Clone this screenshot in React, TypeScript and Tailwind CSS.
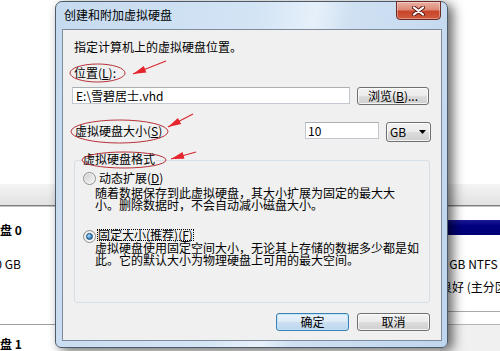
import React from "react";

const cjk = "font-['Noto_Sans_CJK_SC','Noto_Sans',sans-serif]";
const winButton =
  "flex items-center justify-center rounded-[3px] border border-[#707070] bg-[linear-gradient(#f2f2f2_0%,#ebebeb_49%,#dddddd_50%,#cfcfcf_100%)] shadow-[inset_0_0_0_1px_rgba(255,255,255,0.75)] text-[12px] leading-[12px] text-black";

const arrowHead = (x1: number, y1: number, x2: number, y2: number, len = 13, half = 3.5) => {
  const dx = x2 - x1;
  const dy = y2 - y1;
  const d = Math.hypot(dx, dy);
  const ux = dx / d;
  const uy = dy / d;
  const bx = x2 - ux * len;
  const by = y2 - uy * len;
  return `${x2},${y2} ${bx + uy * half},${by - ux * half} ${bx - uy * half},${by + ux * half}`;
};

const arrows = [
  { x1: 166, y1: 61, x2: 133, y2: 74 },
  { x1: 193, y1: 114, x2: 168, y2: 127 },
  { x1: 196, y1: 152, x2: 171, y2: 159 },
];

const Radio: React.FC<{ checked?: boolean }> = ({ checked }) => (
  <span className="flex h-[13px] w-[13px] shrink-0 items-center justify-center rounded-full border border-[#8e8f8f] bg-[linear-gradient(135deg,#e6e6e6,#fbfbfb)]">
    {checked ? (
      <span className="h-[7px] w-[7px] rounded-full border border-[#1c4c74] bg-[radial-gradient(circle_at_35%_35%,#b7e1fb,#3a8fd0_55%,#17507f)]" />
    ) : (
      <span className="h-[9px] w-[9px] rounded-full bg-[linear-gradient(135deg,#cfd1d3,#f4f4f4)]" />
    )}
  </span>
);

// mnemonic letter, e.g. (L)
const Mn: React.FC<{ k: string }> = ({ k }) => (
  <>
    (<span className="inline-block align-top underline underline-offset-[1px]">{k}</span>)
  </>
);

const DiskBackground = () => (
  <div className={`flex h-full flex-col ${cjk} text-[12px] text-black`}>
    <div className="h-[186px] bg-white" />
    <div className="h-[21px] bg-[linear-gradient(#f4f4f4,#e2e2e2)]" />
    <div className="h-[1px] bg-[#7f7f7f]" />
    <div className="h-[1px] bg-[#c4c4c4]" />
    <div className="flex flex-1">
      <div className="flex w-[55px] flex-col overflow-hidden bg-white">
        <span className="-ml-[12px] mt-[16px] whitespace-nowrap font-bold leading-[14px]">磁盘 0</span>
        <span className="-ml-[28px] mt-[20px] whitespace-nowrap leading-[14px]">60.00 GB</span>
        <div className="mt-[53px] h-[1px] bg-[#a0a0a0]" />
        <span className="-ml-[12px] mt-[12px] whitespace-nowrap font-bold leading-[14px]">磁盘 1</span>
      </div>
      <div className="flex-1 bg-white" />
      <div className="flex w-[60px] flex-col overflow-hidden bg-white">
        <div className="mt-[13px] h-[15px] bg-[linear-gradient(#1a1a96,#00007f_40%,#000078)]" />
        <span className="mt-[22px] whitespace-nowrap leading-[14px]">5 GB NTFS</span>
        <span className="mt-[9px] whitespace-nowrap leading-[14px]">良好 (主分区)</span>
        <div className="mt-[17px] h-[1px] bg-[#a9a9a9]" />
        <div className="h-[12px] bg-white" />
        <div className="h-[1px] bg-[#b5b5b5]" />
        <div className="flex-1 bg-[#f0f0f0]" />
      </div>
    </div>
  </div>
);

const Dialog = () => (
  <div
    className={`absolute left-[55px] top-[1px] flex h-[347px] w-[393px] flex-col rounded-t-[7px] rounded-b-[6px] border border-[#4d5a69] bg-[linear-gradient(100deg,#c6daef_0%,#d3e4f5_45%,#e6f0fa_58%,#cfe0f2_66%,#c0d6ee_100%)] shadow-[5px_3px_12px_rgba(0,0,0,0.6)] ${cjk}`}
  >
    <div className="relative flex h-[27px] shrink-0 items-start">
      <span className="ml-[8px] mt-[6px] text-[12px] leading-[13px] text-black">创建和附加虚拟硬盘</span>
      <div className="absolute right-[6px] top-[-1px] flex h-[19px] w-[45px] items-center justify-center rounded-b-[4px] border border-[#6d2a22] bg-[linear-gradient(#eab0a4_0%,#dd8a76_45%,#c8452c_55%,#d05a3c_100%)] shadow-[inset_0_0_0_1px_rgba(255,255,255,0.35)]">
        <svg width="13" height="10" viewBox="0 0 13 10">
          <path d="M2 1.5 L11 8.5 M11 1.5 L2 8.5" stroke="#5a1e16" strokeWidth="4" strokeLinecap="round" />
          <path d="M2 1.5 L11 8.5 M11 1.5 L2 8.5" stroke="#ffffff" strokeWidth="2.2" strokeLinecap="round" />
        </svg>
      </div>
    </div>

    <div className="mb-[6px] ml-[6px] mr-[5px] flex flex-1 flex-col border border-[#7d8b9c] bg-[#f0f0f0] text-[12px] leading-[12px] text-black">
      <span className="pl-[11px] pt-[11px]">指定计算机上的虚拟硬盘位置。</span>
      <span className="mt-[14px] pl-[11px]">
        位置<Mn k="L" />:
      </span>

      <div className="mt-[8px] flex items-start gap-[7px] pl-[9px]">
        <div className="flex h-[17px] w-[278px] items-center border border-[#c3c7cf] border-t-[#abadb3] bg-white pl-[3px]">
          {"E:\\雪碧居士.vhd"}
        </div>
        <button className={`${winButton} h-[18px] w-[72px]`}>
          浏览<Mn k="B" />...
        </button>
      </div>

      <div className="mt-[17px] flex items-start pr-[10px]">
        <span className="mt-[3px] pl-[12px]">
          虚拟硬盘大小<Mn k="S" />
        </span>
        <div className="ml-auto flex items-start gap-[7px]">
          <div className="flex h-[17px] w-[74px] items-center border border-[#c3c7cf] border-t-[#abadb3] bg-white pl-[2px]">10</div>
          <div className="flex h-[20px] w-[45px] items-center justify-between rounded-[3px] border border-[#707070] bg-[linear-gradient(#f2f2f2_0%,#ebebeb_49%,#dddddd_50%,#cfcfcf_100%)] pl-[3px] pr-[4px] shadow-[inset_0_0_0_1px_rgba(255,255,255,0.75)]">
            <span>GB</span>
            <svg width="7" height="4" viewBox="0 0 7 4">
              <path d="M0 0 H7 L3.5 4 Z" fill="#000" />
            </svg>
          </div>
        </div>
      </div>

      <div className="ml-[11px] mt-[18px] flex h-[143px] w-[356px] flex-col rounded-[3px] border border-[#d5dfe5]">
        <span className="-mt-[8px] ml-[7px] self-start bg-[#f0f0f0] px-[1px]">虚拟硬盘格式</span>

        <div className="mt-[7px] flex h-[12px] items-start pl-[8px]">
          <Radio />
          <span className="ml-[3px]">
            动态扩展<Mn k="D" />
          </span>
        </div>
        <div className="mt-[3px] flex flex-col pl-[20px] leading-[12px]">
          <span>随着数据保存到此虚拟硬盘，其大小扩展为固定的最大大</span>
          <span>小。删除数据时，不会自动减小磁盘大小。</span>
        </div>

        <div className="mt-[19px] flex h-[12px] items-start pl-[8px]">
          <Radio checked />
          <span className="-mt-[1px] ml-[1px] border border-dotted border-black leading-[10px]">
            固定大小(推荐)<Mn k="F" />
          </span>
        </div>
        <div className="flex flex-col pl-[20px] leading-[12px]">
          <span>虚拟硬盘使用固定空间大小，无论其上存储的数据多少都是如</span>
          <span>此。它的默认大小为物理硬盘上可用的最大空间。</span>
        </div>
      </div>

      <div className="mt-[10px] flex justify-end gap-[8px] pr-[11px]">
        <button className="flex h-[18px] w-[73px] items-center justify-center rounded-[3px] border border-[#3c7fb1] bg-[linear-gradient(#eaf3fb_0%,#dce9f5_49%,#cde0f1_50%,#bcd6ee_100%)] shadow-[inset_0_0_0_1px_rgba(190,230,253,0.9)] text-[12px] leading-[12px]">
          确定
        </button>
        <button className={`${winButton} h-[18px] w-[73px]`}>取消</button>
      </div>
    </div>
  </div>
);

const Annotations = () => (
  <svg className="pointer-events-none absolute left-0 top-0" width="500" height="351" viewBox="0 0 500 351">
    <ellipse cx="97.5" cy="73" rx="27.5" ry="9" fill="none" stroke="#b8323a" strokeWidth="1" />
    <ellipse cx="119.5" cy="131.5" rx="48.5" ry="11.5" fill="none" stroke="#b8323a" strokeWidth="1" />
    <ellipse cx="124" cy="160" rx="42" ry="8" fill="none" stroke="#b8323a" strokeWidth="1" />
    {arrows.map((a, i) => (
      <g key={i}>
        <line x1={a.x1} y1={a.y1} x2={a.x2} y2={a.y2} stroke="#d8262c" strokeWidth="1.1" />
        <polygon points={arrowHead(a.x1, a.y1, a.x2, a.y2)} fill="#e5252b" />
      </g>
    ))}
  </svg>
);

export default function App() {
  return (
    <div className="relative h-[351px] w-[500px] overflow-hidden bg-white">
      <DiskBackground />
      <Dialog />
      <Annotations />
    </div>
  );
}
